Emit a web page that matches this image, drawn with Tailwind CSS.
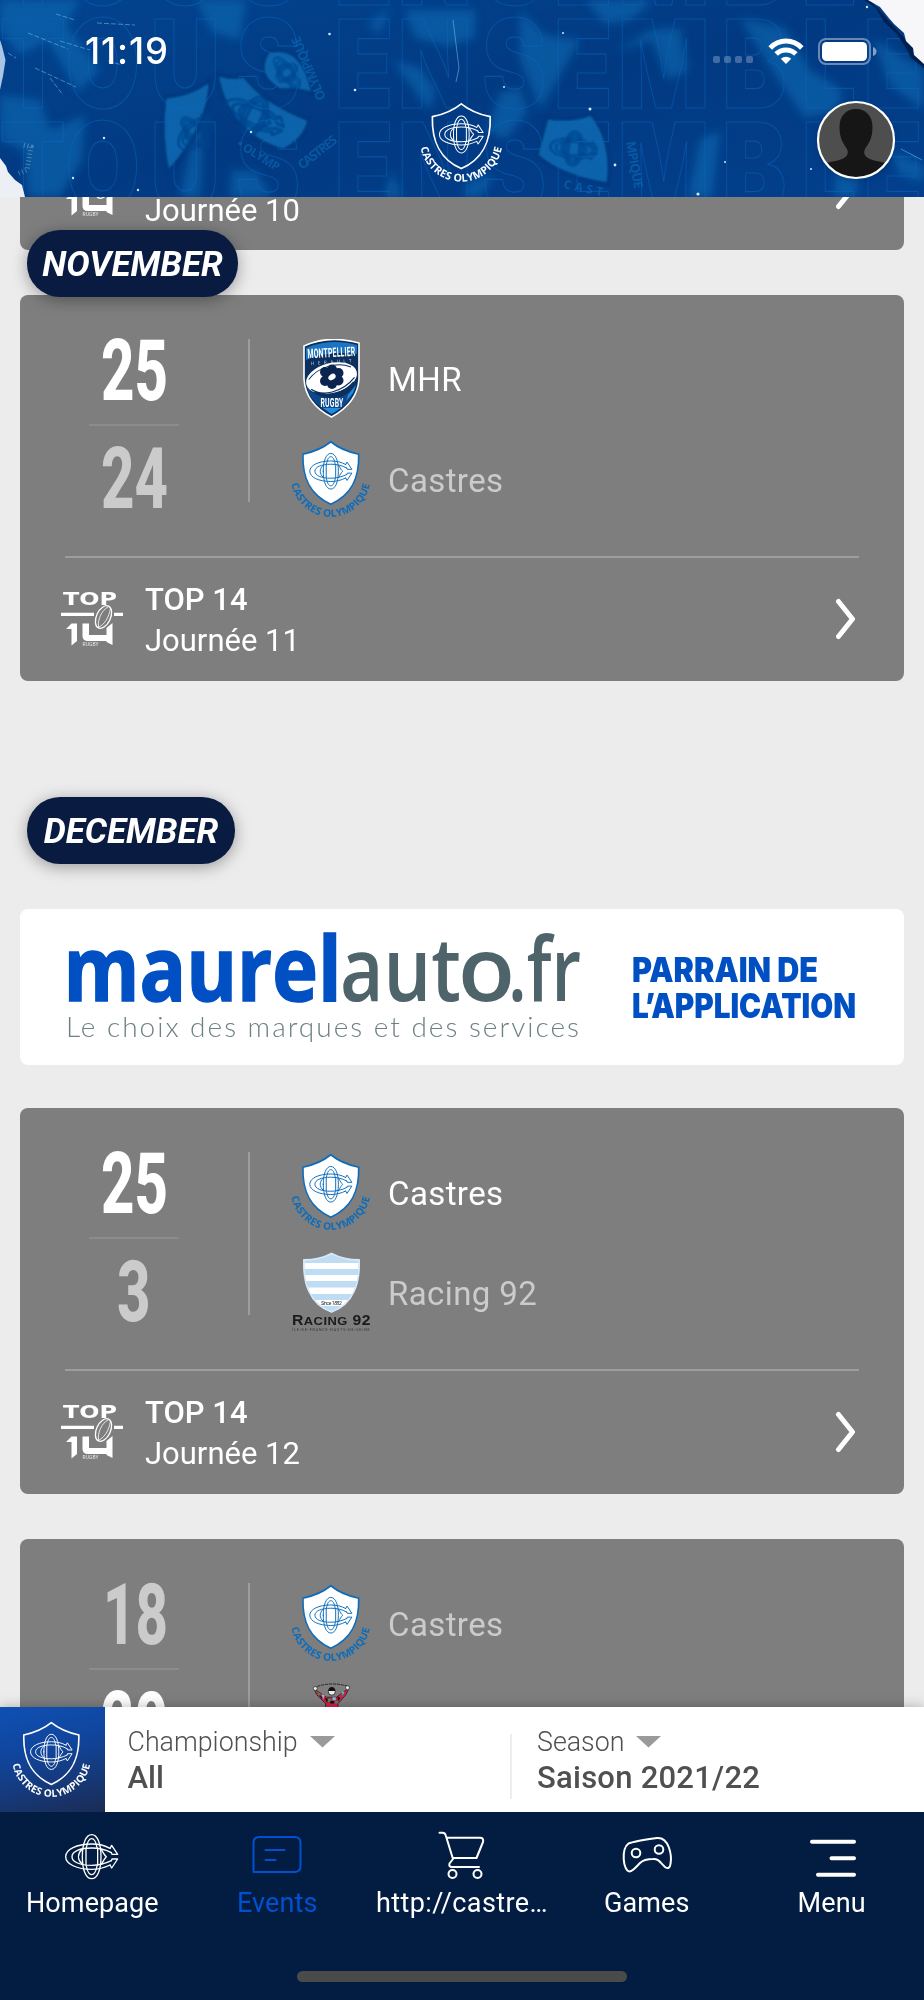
<!DOCTYPE html>
<html lang="en">
<head>
    <meta charset="UTF-8">
    <meta name="viewport" content="width=device-width, initial-scale=1.0">
    <title>Castres Olympique - Events</title>
    <!-- Tailwind CSS -->
    <script src="https://cdn.jsdelivr.net/npm/@tailwindcss/browser@4"></script>
    <style>
        body {
            font-family: 'Roboto', 'Liberation Sans', sans-serif;
        }
        .score {
            font-family: 'Roboto', sans-serif;
            font-weight: 800;
            font-size: 85px;
            flex-shrink: 0;
            overflow: visible;
        }
    </style>
</head>
<body class="bg-[#ececec]">

    <!-- Shared logos -->
    <svg class="absolute w-0 h-0" aria-hidden="true">
        <defs>
            <path id="motto-arc" d="M0.3 45 A41.4 41.4 0 0 0 82.3 45" />
            <g id="knot-lines" fill="none" stroke="currentColor" stroke-linejoin="round" stroke-linecap="round">
                <path d="M51 70 C51 30 62 4 79 4 C96 4 107 30 107 70 C107 110 96 136 79 136 C62 136 51 110 51 70 Z" />
                <path d="M63 43 C66 26 71 16 79 16 C87 16 92 26 95 43 M63 98 C66 114 71 124 79 124 C87 124 92 114 95 98" />
                <path d="M134 45 C118 36 100 32 79 32 C34 32 1 48 1 70 C1 92 34 108 79 108 C100 108 118 103 134 95" />
                <path d="M138 58 C120 48 100 44 79 44 C44 44 20 54 20 70 C20 86 44 96 79 96 C100 96 120 91 138 82" />
                <path d="M134 45 L139 36 L157 63 L140 63 L138 58 M134 95 L139 104 L157 77 L140 77 L138 82" />
                <path d="M62 45 V96 M97 45 V96 M50 48 C36 62 36 78 50 92 M108 48 C114 60 118 66 123 70 C118 75 114 81 108 93" />
            </g>
            <symbol id="castres" viewBox="0 0 83 86">
                <path d="M41.3 2.8 C33 9.5 23 13.5 12.4 15.7 C11.6 41 20 58 41.3 67.6 C62.6 58 71 41 70.2 15.7 C59.6 13.5 49.6 9.5 41.3 2.8 Z" stroke="currentColor" stroke-width="1.7" />
                <g transform="translate(19.2 13.8) scale(.28)" stroke-width="3.600"><use href="#knot-lines" /></g>
                <text fill="currentColor" font-family="Open Sans, sans-serif" font-weight="700" font-size="10.6"><textPath href="#motto-arc" startOffset="1.500" textLength="115">CASTRES OLYMPIQUE</textPath></text>
            </symbol>
            <symbol id="top14" viewBox="0 0 62 56">
                <g fill="currentColor" font-family="DejaVu Sans, sans-serif" font-weight="700">
                    <text x="2" y="13.5" font-size="17" textLength="54" lengthAdjust="spacingAndGlyphs">TOP</text>
                    <path d="M0 21.700 H33 V25 H0 Z M53 21.700 H62 V25 H53 Z" />
                    <path d="M5 38 L10.500 32.500 H16 V50 L10.500 54.500 V38 Z M21.500 32.500 H28 V44 H45.500 V37 L51.500 32 V54 L45.500 51 V50 H27 Q21.500 50 21.500 45 Z" />
                    <text x="21.5" y="54.8" font-family="Roboto" font-size="5" font-weight="400" textLength="16" opacity=".8">RUGBY</text>
                </g>
                <g fill="none" stroke="currentColor">
                    <ellipse cx="42.500" cy="26" rx="7" ry="12" transform="rotate(25 42.5 26)" fill="#7e7e7e" stroke-width="1.300" />
                    <path d="M47 16 C41 19 36.500 28 37.500 36 M49.500 17 C48 27 43 34 37 36.500" stroke-width=".8" />
                </g>
            </symbol>
            <symbol id="mhr" viewBox="0 0 80 80">
                <path d="M13 7 C30 -1 50 -1 68 4 V40 C67 58 55 70 40.500 78 C25 70 14 58 13 40 Z" fill="#0c2f5e" stroke="#fff" stroke-width="1.600" />
                <path d="M15 9 C31 2 50 1.500 66 6 V15 C50 13 31 14 15 21 Z" fill="#1b75c0" />
                <path d="M15 46 C18 60 28 68 40.500 75 C54 68 62 60 65.500 44 C57 57 49 59 40 59 C29 59 20 54 15 46 Z" fill="#0d478c" />
                <path d="M32 69 L40.500 75 L50 69 Z M55 62 L62 54 L65 46 L57 56 Z" fill="#1f8fdd" />
                <text x="16.5" y="18" transform="rotate(-3 40 15)" fill="#fff" font-family="Roboto" font-weight="700" font-size="13" textLength="48" lengthAdjust="spacingAndGlyphs">MONTPELLIER</text>
                <text x="20" y="24.500" transform="rotate(-4 40 24)" fill="#c8d6e8" font-family="Roboto" font-size="4.500" textLength="41">HERAULT</text>
                <g transform="rotate(-14 40.500 39)">
                    <ellipse cx="40.500" cy="39" rx="26" ry="15" fill="#fff" />
                    <path d="M18 45 C27 55 47 56 63 44 M21 49 C34 58 50 56 61 48" fill="none" stroke="#0c2f5e" stroke-width="1.200" />
                    <path d="M18 35 C30 25 50 24 62 33" fill="none" stroke="#0c2f5e" />
                </g>
                <g fill="#0c2450">
                    <circle cx="40.500" cy="38" r="9" /><circle cx="34" cy="33" r="5" /><circle cx="41" cy="30.500" r="5" /><circle cx="47.500" cy="34" r="5" />
                    <circle cx="47.500" cy="41.500" r="5" /><circle cx="41" cy="45" r="5" /><circle cx="34" cy="42" r="5" />
                </g>
                <ellipse cx="41" cy="38" rx="4" ry="2.800" transform="rotate(-35 41 38)" fill="#fff" />
                <text x="29.500" y="67.500" fill="#fff" font-family="Roboto" font-weight="700" font-size="13" textLength="23" lengthAdjust="spacingAndGlyphs">RUGBY</text>
            </symbol>
            <symbol id="racing" viewBox="0 0 80 80">
                <clipPath id="racing-shield"><path d="M40.500 1.500 C32 6 22 8 13 8 C12 30 18 52 40.500 60 C63 52 69 30 68 8 C59 8 49 6 40.500 1.500 Z" /></clipPath>
                <g clip-path="url(#racing-shield)">
                    <path d="M0 0 H80 V62 H0 Z" fill="#fff" />
                    <path d="M0 0 H80 V11 H0 Z M0 17 H80 V23 H0 Z M0 29 H80 V35.500 H0 Z M0 42 H80 V48 H0 Z M0 54 H80 V62 H0 Z" fill="#bedcf4" />
                </g>
                <path d="M40.500 1.500 C32 6 22 8 13 8 C12 30 18 52 40.500 60 C63 52 69 30 68 8 C59 8 49 6 40.500 1.500 Z" fill="none" stroke="#d7e9f8" stroke-width="1.800" />
                <text x="30" y="52.500" font-family="Roboto" font-size="5" fill="#222" font-style="italic" textLength="21">Since 1882</text>
                <text x="1" y="73" font-family="Liberation Sans" font-weight="700" font-size="14" fill="#1b1b1b" textLength="79" lengthAdjust="spacingAndGlyphs">R<tspan font-size="11.500">ACING</tspan> 92</text>
                <text x="1" y="79" font-family="Roboto" font-size="3.500" fill="#333" textLength="78">ÎLE-DE-FRANCE HAUTS-DE-SEINE</text>
            </symbol>
            <symbol id="chevron" viewBox="0 0 22 42">
                <path d="M3.500 3.500 L17.500 21 L3.500 38.500" fill="none" stroke="currentColor" stroke-width="5" stroke-linecap="round" stroke-linejoin="round" />
            </symbol>
        </defs>
    </svg>

    <div class="relative w-[924px] h-[2000px] flex flex-col overflow-hidden">

        <!-- Header -->
        <header class="relative h-[197px] shrink-0 overflow-hidden bg-[#023c86]">
            <svg class="absolute inset-0" width="924" height="197" viewBox="0 0 924 197">
                <defs>
                    <linearGradient id="head-bg" x1="0" y1="0" x2="1" y2="1">
                        <stop offset="0" stop-color="#03438f" /><stop offset=".5" stop-color="#023a82" /><stop offset="1" stop-color="#033f8c" />
                    </linearGradient>
                    <filter id="soft" x="-30%" y="-30%" width="160%" height="160%"><feGaussianBlur stdDeviation="5" /></filter>
                    <filter id="softer" x="-30%" y="-30%" width="160%" height="160%"><feGaussianBlur stdDeviation="1.2" /></filter>
                </defs>
                <rect width="924" height="197" fill="url(#head-bg)" />
                <!-- Crowd -->
                <g fill="#0a70b8" filter="url(#soft)" opacity=".55">
                    <path d="M0 0 H80 L66 25 L100 70 L78 92 L48 40 L20 55 L0 30 Z" />
                    <path d="M0 95 L40 100 L50 130 L85 115 L82 160 L60 197 H28 L24 150 L0 140 Z" />
                    <path d="M196 0 H246 L240 40 L212 32 Z" />
                    <path d="M232 170 L256 172 L272 197 H230 Z M190 150 L205 110 L200 197 H180 Z" />
                    <path d="M405 10 H475 V38 L450 46 L415 38 Z" />
                    <path d="M368 25 L390 6 L380 34 Z M392 60 L420 68 L436 90 L430 112 Z" />
                    <path d="M520 10 L545 35 L580 40 L552 90 L540 110 L520 60 Z" />
                    <path d="M585 0 H655 L630 20 L605 24 Z M615 52 L650 30 L680 28 L688 70 L668 80 L652 40 Z" />
                    <path d="M500 92 L520 88 L528 112 L505 140 L488 130 Z M700 140 L720 130 L712 197 H688 Z" />
                    <path d="M740 18 L785 28 L810 70 L842 90 L838 110 L805 118 L775 75 Z" />
                    <path d="M835 165 L860 180 L855 197 H835 Z M890 150 L924 165 V182 L900 175 Z M872 38 L924 70 V110 L890 85 Z" />
                    <path d="M470 180 L495 175 L480 197 H462 Z M392 170 L402 197 H384 Z" />
                </g>
                <!-- Flags -->
                <g filter="url(#softer)">
                    <g fill="#0863ab" stroke="#03387c" stroke-width="3">
                        <path d="M165 97 Q192 95 210 80 Q210 125 168 172 Q160 135 165 97 Z" />
                        <path d="M217 74 Q232 80 244 76 Q262 102 309 120 Q304 140 283 150 Q228 134 217 74 Z" />
                        <path d="M268 52 Q302 42 313 94 Q300 88 280 90 Q254 75 268 52 Z" />
                        <path d="M547 118 Q574 122 591 114 Q613 140 608 184 Q560 176 537 155 Z" />
                    </g>
                    <g color="#04428a" stroke-width="7" opacity=".9">
                        <g transform="translate(234 84) rotate(24) scale(.4 .3)"><use href="#knot-lines" /></g>
                        <g transform="translate(166 132) rotate(-42) scale(.27 .3)"><use href="#knot-lines" /></g>
                        <g transform="translate(285 50) rotate(52) scale(.24 .18)"><use href="#knot-lines" /></g>
                        <g transform="translate(552 128) rotate(6) scale(.3 .26)"><use href="#knot-lines" /></g>
                    </g>
                </g>
                <g fill="#0c68b2" font-family="Open Sans, sans-serif" font-weight="700" opacity=".65">
                    <text x="0" y="0" font-size="13" transform="translate(326 98) rotate(-113)" textLength="68">OLYMPIQUE</text>
                    <text x="0" y="0" font-size="13" transform="translate(302 170) rotate(-38)" textLength="46">CASTRES</text>
                    <text x="0" y="0" font-size="12" transform="translate(236 146) rotate(32)" textLength="48">• OLYMP</text>
                    <text x="0" y="0" font-size="12" transform="translate(563 188) rotate(12)" textLength="40">CAST</text>
                    <text x="0" y="0" font-size="13" transform="translate(626 142) rotate(80)" textLength="48">MPIQUE</text>
                </g>
                <!-- Slogan outline -->
                <g font-family="Inter, sans-serif" font-weight="900" font-size="123" fill="none" stroke="#0c68c0" stroke-width="1.200" opacity=".5" transform="scale(.78 1)">
                    <text y="5" x="0 84 193 303 429 510 618 710 792 926 1028 1107">TOUSENSEMBLE</text>
                    <text y="108" x="0 84 193 303 429 510 618 710 792 926 1028 1107">TOUSENSEMBLE</text>
                    <text y="211" x="0 84 193 303 429 510 618 710 792 926 1028 1107">TOUSENSEMBLE</text>
                </g>
                <!-- Scratches and dust -->
                <g stroke="#6cb6e8" stroke-width="1" fill="none" opacity=".6">
                    <path d="M28 33 L68 49 M60 41 L90 50 M35 68 L76 87 M50 78 L63 95 M97 23 L135 25 M56 14 L75 20 M8 53 L16 58 M108 61 L122 65" stroke-dasharray="5 2" />
                    <path d="M453 20 L459 68 L456 82 M901 149 L922 160" />
                </g>
                <path d="M24 145 L31 147 L27 170 L17 174" fill="none" stroke="#bcdcf2" stroke-width="5" stroke-dasharray="1 2.500" opacity=".35" />
                <g fill="#cfe8fa">
                    <circle cx="329.500" cy="34" r="1.300" /><circle cx="355" cy="90" r="1.300" /><circle cx="104" cy="138" r="1.200" /><circle cx="73" cy="178" r="1.200" /><circle cx="138" cy="190" r="1.200" />
                    <circle cx="590" cy="109" r="1.500" /><circle cx="615" cy="165" r="1.400" /><circle cx="698" cy="194" r="1.600" /><circle cx="867" cy="7" r="1.200" /><circle cx="504" cy="87" r="1" />
                    <circle cx="563" cy="33" r="1" /><circle cx="725" cy="162" r="1" /><circle cx="811" cy="169" r="1" /><circle cx="251" cy="132" r="1.200" />
                </g>
                <!-- Torn paper -->
                <path d="M864 0 L876 8 L884 22 L897 34 L906 48 L911 58 L924 68 V60 L870 0 Z" fill="#02204f" />
                <path d="M868 0 L880 7 L888 17 L894 24 L904 33 L906 41 L913 48 L914 55 L924 64 V0 Z" fill="#f7f7fa" />
                <path d="M0 158 L6 166 L8 172 L15 180 L22 185 L25 197 H0 Z" fill="#eceff3" />
                <path d="M0 40 L2 46 L5.500 60 L3 76 L0 90 Z" fill="#a9c6e6" />
            </svg>

            <svg class="absolute left-[420px] top-[100.500px] fill-none text-white" width="83" height="86"><use href="#castres" /></svg>

            <!-- Status bar -->
            <div class="relative flex items-center h-[102px] pl-[85px] pr-[46px] text-white">
                <span class="font-['Inter'] font-medium text-[36.500px] tracking-[0.900px] leading-none">11:19</span>
                <div class="ml-auto flex items-center">
                    <div class="flex gap-[4px] mt-[16px] mr-[15px]">
                        <span class="size-[7px] rounded-[2px] bg-white/25"></span>
                        <span class="size-[7px] rounded-[2px] bg-white/25"></span>
                        <span class="size-[7px] rounded-[2px] bg-white/25"></span>
                        <span class="size-[7px] rounded-[2px] bg-white/25"></span>
                    </div>
                    <svg class="mr-[14px]" width="36" height="27" viewBox="0 0 36 27" fill="none" stroke="currentColor" stroke-width="5">
                        <path d="M2.200 10 C11 .8 25 .8 33.800 10" />
                        <path d="M8.200 16 C13.500 10.600 22.500 10.600 27.800 16" />
                        <path d="M18 26 L12.800 20.800 C15.800 18 20.200 18 23.200 20.800 Z" fill="currentColor" stroke="none" />
                    </svg>
                    <svg width="60" height="27" viewBox="0 0 60 27">
                        <rect x="1" y="1" width="51" height="25" rx="7" fill="none" stroke="#fff" stroke-opacity=".4" stroke-width="2" />
                        <rect x="4" y="4" width="45" height="19" rx="4.500" fill="#fff" />
                        <path d="M55 9 Q58.500 10.500 58.500 13.500 Q58.500 16.500 55 18 Z" fill="#fff" fill-opacity=".5" />
                    </svg>
                </div>
            </div>

            <!-- Avatar -->
            <svg class="absolute left-[816px] top-[99px] drop-shadow-md" width="80" height="82" viewBox="0 0 80 82">
                <clipPath id="avatar"><circle cx="40" cy="41" r="38" /></clipPath>
                <circle cx="40" cy="41" r="38" fill="#4e4e4e" />
                <path clip-path="url(#avatar)" fill="#161616" d="M40 10 C50 10 56.500 17 56.500 28 C56.500 39 53 44 49 50 C47 55 49 58 54 60 C61 63 68 62 72 66 V82 H8 V66 C12 62 19 63 26 60 C31 58 33 55 31 50 C27 44 23.500 39 23.500 28 C23.500 17 30 10 40 10 Z" />
                <circle cx="40" cy="41" r="38" fill="none" stroke="#fff" stroke-width="2.200" />
            </svg>
        </header>

        <!-- Event list -->
        <main class="relative h-[1510px] shrink-0 overflow-hidden px-[20px]">

            <!-- Journée 10 -->
            <section class="-mt-[333px] h-[386px] rounded-lg bg-[#7e7e7e] text-white flex flex-col justify-end">
                <div class="h-[122px] flex items-center pl-[41px] pr-[47px]">
                    <svg width="62" height="56"><use href="#top14" /></svg>
                    <div class="ml-[22px] mt-[2px] text-[31px] leading-[41px]">
                        <p class="font-medium">TOP 14</p>
                        <p>Journée 10</p>
                    </div>
                    <svg class="ml-auto" width="22" height="42"><use href="#chevron" /></svg>
                </div>
            </section>

            <div class="absolute z-10 left-[27px] top-[33px] w-[211px] h-[67px] rounded-[33px] bg-[#091b40] shadow-[0_3px_16px_rgba(0,0,0,0.35)] flex items-center justify-center">
                <span class="mt-[4px] text-white text-[35px] font-bold italic">NOVEMBER</span>
            </div>

            <!-- Journée 11 -->
            <section class="mt-[45px] h-[386px] rounded-lg bg-[#7e7e7e] text-white pt-[44px]">
                <div class="flex h-[163px]">
                    <div class="w-[228px] flex flex-col items-center">
                        <svg class="score" width="68" height="61"><text x="1" y="61" fill="#fff" textLength="67" lengthAdjust="spacingAndGlyphs">25</text></svg>
                        <div class="mt-[24px] mb-[21px] w-[90px] h-[2px] shrink-0 bg-[#8c8c8c]"></div>
                        <svg class="score" width="68" height="61"><text x="1" y="61" fill="#cbcbcb" textLength="67" lengthAdjust="spacingAndGlyphs">24</text></svg>
                    </div>
                    <div class="w-[2px] bg-[#9d9d9d]"></div>
                    <div class="ml-[41px] flex flex-col gap-[20px] text-[33px] tracking-[0.4px]">
                        <div class="h-[80px] flex items-center gap-[17px]">
                            <svg width="80" height="80"><use href="#mhr" /></svg>
                            <span class="mt-[2px]">MHR</span>
                        </div>
                        <div class="h-[80px] flex items-center gap-[17px]">
                            <svg class="mt-[2px] fill-white text-[#0c6cbc]" width="80" height="83"><use href="#castres" /></svg>
                            <span class="mt-[3px] text-[#cbcbcb]">Castres</span>
                        </div>
                    </div>
                </div>
                <div class="mt-[54px] mx-[45px] h-[2px] bg-[#9d9d9d]"></div>
                <div class="h-[122px] flex items-center pl-[41px] pr-[47px]">
                    <svg width="62" height="56"><use href="#top14" /></svg>
                    <div class="ml-[22px] mt-[2px] text-[31px] leading-[41px]">
                        <p class="font-medium">TOP 14</p>
                        <p>Journée 11</p>
                    </div>
                    <svg class="ml-auto" width="22" height="42"><use href="#chevron" /></svg>
                </div>
            </section>

            <div class="mt-[116px] ml-[7px] w-[208px] h-[67px] rounded-[33px] bg-[#091b40] shadow-[0_3px_16px_rgba(0,0,0,0.35)] flex items-center justify-center">
                <span class="mt-[4px] text-white text-[35px] font-bold italic">DECEMBER</span>
            </div>

            <!-- Sponsor -->
            <section class="mt-[45px] h-[156px] rounded-lg bg-white">
                <svg width="884" height="156" viewBox="20 909 884 156">
                    <g font-family="Open Sans, sans-serif">
                        <text x="63.500" y="1000.500" font-size="89" font-weight="700" fill="#0050c4" stroke="#0050c4" stroke-width="1.500" textLength="278" lengthAdjust="spacingAndGlyphs">maurel</text>
                        <g font-size="89" font-weight="600" fill="#4f646a">
                            <text x="340" y="1000.500" textLength="121" lengthAdjust="spacingAndGlyphs">aut</text>
                            <text x="458" y="1000.500" textLength="57" lengthAdjust="spacingAndGlyphs">o</text>
                            <text x="508" y="1000.500" textLength="73" lengthAdjust="spacingAndGlyphs">.fr</text>
                        </g>
                    </g>
                    <text x="66" y="1037" font-family="Lato, sans-serif" font-size="28" font-weight="300" fill="#6d8084" textLength="513">Le choix des marques et des services</text>
                    <g font-family="Inter, sans-serif" font-size="33.500" font-weight="900" fill="#0050c4">
                        <text x="632" y="981.500" textLength="186" lengthAdjust="spacingAndGlyphs">PARRAIN DE</text>
                        <text x="632" y="1017.500" textLength="224" lengthAdjust="spacingAndGlyphs">L’APPLICATION</text>
                    </g>
                </svg>
            </section>

            <!-- Journée 12 -->
            <section class="mt-[43px] h-[386px] rounded-lg bg-[#7e7e7e] text-white pt-[44px]">
                <div class="flex h-[163px]">
                    <div class="w-[228px] flex flex-col items-center">
                        <svg class="score" width="68" height="61"><text x="1" y="61" fill="#fff" textLength="67" lengthAdjust="spacingAndGlyphs">25</text></svg>
                        <div class="mt-[24px] mb-[21px] w-[90px] h-[2px] shrink-0 bg-[#8c8c8c]"></div>
                        <svg class="score" width="34" height="61"><text x="0" y="61" fill="#cbcbcb" textLength="33.500" lengthAdjust="spacingAndGlyphs">3</text></svg>
                    </div>
                    <div class="w-[2px] bg-[#9d9d9d]"></div>
                    <div class="ml-[41px] flex flex-col gap-[20px] text-[33px] tracking-[0.4px]">
                        <div class="h-[80px] flex items-center gap-[17px]">
                            <svg class="mt-[2px] fill-white text-[#0c6cbc]" width="80" height="83"><use href="#castres" /></svg>
                            <span class="mt-[3px]">Castres</span>
                        </div>
                        <div class="h-[80px] flex items-center gap-[17px]">
                            <svg width="80" height="80"><use href="#racing" /></svg>
                            <span class="mt-[3px] text-[#cbcbcb]">Racing 92</span>
                        </div>
                    </div>
                </div>
                <div class="mt-[54px] mx-[45px] h-[2px] bg-[#9d9d9d]"></div>
                <div class="h-[122px] flex items-center pl-[41px] pr-[47px]">
                    <svg width="62" height="56"><use href="#top14" /></svg>
                    <div class="ml-[22px] mt-[2px] text-[31px] leading-[41px]">
                        <p class="font-medium">TOP 14</p>
                        <p>Journée 12</p>
                    </div>
                    <svg class="ml-auto" width="22" height="42"><use href="#chevron" /></svg>
                </div>
            </section>

            <!-- Next game, cut by the filter bar -->
            <section class="mt-[45px] h-[386px] rounded-lg bg-[#7e7e7e] text-white pt-[44px]">
                <div class="flex h-[163px]">
                    <div class="w-[228px] flex flex-col items-center">
                        <svg class="score" width="68" height="61"><text x="3" y="61" fill="#cbcbcb" textLength="65" lengthAdjust="spacingAndGlyphs">18</text></svg>
                        <div class="mt-[24px] mb-[21px] w-[90px] h-[2px] shrink-0 bg-[#8c8c8c]"></div>
                        <svg class="score" width="68" height="61"><text x="1" y="61" fill="#fff" textLength="67" lengthAdjust="spacingAndGlyphs">20</text></svg>
                    </div>
                    <div class="w-[2px] bg-[#9d9d9d]"></div>
                    <div class="ml-[41px] flex flex-col gap-[20px] text-[33px] tracking-[0.4px]">
                        <div class="h-[80px] flex items-center gap-[17px]">
                            <svg class="mt-[2px] fill-white text-[#0c6cbc]" width="80" height="83"><use href="#castres" /></svg>
                            <span class="mt-[3px] text-[#cbcbcb]">Castres</span>
                        </div>
                        <svg width="80" height="80" viewBox="0 0 80 80">
                            <path d="M18 6 Q40 -3 64 5" fill="none" stroke="#222" stroke-width="1.200" stroke-dasharray="4 1" />
                            <path d="M18 7 L34 18 H47 L63 6 L59 15 L49 26 V50 H33 V26 L22 15 Z" fill="#c8234f" stroke="#111" stroke-width=".8" />
                            <path d="M23 11 l4 3 -2 3z M36 20 h4 v4 h-4z M52 15 l4 -3 v4z M45 23 h4 v3 h-4z" fill="#3a9a4a" />
                            <path d="M28 14 l4 2 -2 5z M42 18 h4 v4 h-4z M54 11 l3 0 -2 4z" fill="#7fc4e6" />
                            <path d="M32 19 l4 1 -1 5z M48 17 l4 2 -3 4z M39 23 h5 v3 h-5z M25 15 l4 3 -1 2z" fill="#111" />
                            <circle cx="41" cy="11" r="4.500" fill="#eee" stroke="#111" />
                            <path d="M36.500 10 Q37 5 41 5 Q45 5 45.500 10 Z" fill="#111" />
                            <circle cx="20" cy="7" r="2.500" fill="#eee" stroke="#222" stroke-width=".8" /><circle cx="61" cy="6" r="2.500" fill="#eee" stroke="#222" stroke-width=".8" />
                        </svg>
                    </div>
                </div>
            </section>
        </main>

        <!-- Filters -->
        <div class="relative z-10 h-[105px] shrink-0 bg-white flex shadow-[0_0_12px_rgba(0,0,0,0.28)] text-[#505050]">
            <div class="w-[105px] bg-linear-[165deg,#0f50b4,#10459c_40%,#1b2c55] pt-[13px] pl-[12px]">
                <svg class="fill-none text-white" width="79" height="82"><use href="#castres" /></svg>
            </div>
            <div class="w-[405px] pl-[22.500px] pt-[18px]">
                <div class="flex items-center gap-[12px] h-[35px]">
                    <span class="text-[26.800px] font-light">Championship</span>
                    <svg class="-mt-[2px]" width="25" height="12"><path d="M0 0 H25 L12.500 11.500 Z" fill="#9a9a9a" /></svg>
                </div>
                <p class="text-[31px] font-medium leading-[35px]">All</p>
            </div>
            <div class="w-[2px] h-[65px] mt-[27px] bg-[#ededed]"></div>
            <div class="pl-[25px] pt-[18px]">
                <div class="flex items-center gap-[12px] h-[35px]">
                    <span class="text-[26.800px] font-light">Season</span>
                    <svg class="-mt-[2px]" width="25" height="12"><path d="M0 0 H25 L12.500 11.500 Z" fill="#9a9a9a" /></svg>
                </div>
                <p class="text-[31px] font-medium leading-[35px] tracking-[0.250px]">Saison 2021/22</p>
            </div>
        </div>

        <!-- Bottom navigation -->
        <nav class="relative z-20 h-[188px] shrink-0 bg-[#021d41] text-white flex flex-col items-center">
            <div class="grid grid-cols-5 w-full h-[159px] pt-[18px] text-[27px] leading-[32px] tracking-[0.100px]">
                <a href="#" class="flex flex-col items-center">
                    <svg width="54" height="52" viewBox="0 -10 160 156" stroke-width="4"><use href="#knot-lines" /></svg>
                    <span class="mt-[5px]">Homepage</span>
                </a>
                <a href="#" class="flex flex-col items-center text-[#0050d0]">
                    <svg width="54" height="52" viewBox="0 0 54 52" fill="none" stroke="currentColor" stroke-width="2" stroke-linecap="round" stroke-linejoin="round">
                        <path d="M3.500 42 V13 Q3.500 7 9.500 7 H44.500 Q50.500 7 50.500 13 V36 Q50.500 42 44.500 42 Z M15.500 20 H34.500 M15.500 30 H25.500" />
                    </svg>
                    <span class="mt-[5px]">Events</span>
                </a>
                <a href="#" class="flex flex-col items-center">
                    <svg width="54" height="52" viewBox="0 0 54 52" fill="none" stroke="currentColor" stroke-width="2" stroke-linecap="round" stroke-linejoin="round">
                        <path d="M4.500 2.800 H7.500 Q10 2.800 10.700 5.300 L18 29 L14.500 33.500 Q13.500 37 17 37 H44 M12.500 7.800 H45 Q49 7.800 48 12 L41.500 28 H18" />
                        <circle cx="17.500" cy="44" r="4" /><circle cx="42.500" cy="44" r="4" />
                    </svg>
                    <span class="mt-[5px] tracking-[0.400px]">http://castre…</span>
                </a>
                <a href="#" class="flex flex-col items-center">
                    <svg width="54" height="52" viewBox="0 0 54 52" fill="none" stroke="currentColor" stroke-width="2" stroke-linecap="round" stroke-linejoin="round">
                        <path d="M8.500 13.500 C12 12 30 9 37 8 C49 7 52 25 50.500 34 C50 38 48 39 45 37 C40 32 38 28.500 33 29 C26 29 23 30 20 33 C16 37 13 41 9.500 41.500 C3 41 1 19 8.500 13.500 Z" />
                        <circle cx="16" cy="23" r="4.300" /><circle cx="39" cy="19.500" r="4.300" />
                    </svg>
                    <span class="mt-[5px]">Games</span>
                </a>
                <a href="#" class="flex flex-col items-center">
                    <svg width="54" height="52" viewBox="0 0 54 52" stroke="currentColor" stroke-width="4" stroke-linecap="round">
                        <path d="M7 11.700 H49 M26.500 28.200 H49 M13 44.700 H49" />
                    </svg>
                    <span class="mt-[5px]">Menu</span>
                </a>
            </div>
            <div class="w-[330px] h-[11px] rounded-full bg-[#4a4a4a]"></div>
        </nav>
    </div>

</body>
</html>
